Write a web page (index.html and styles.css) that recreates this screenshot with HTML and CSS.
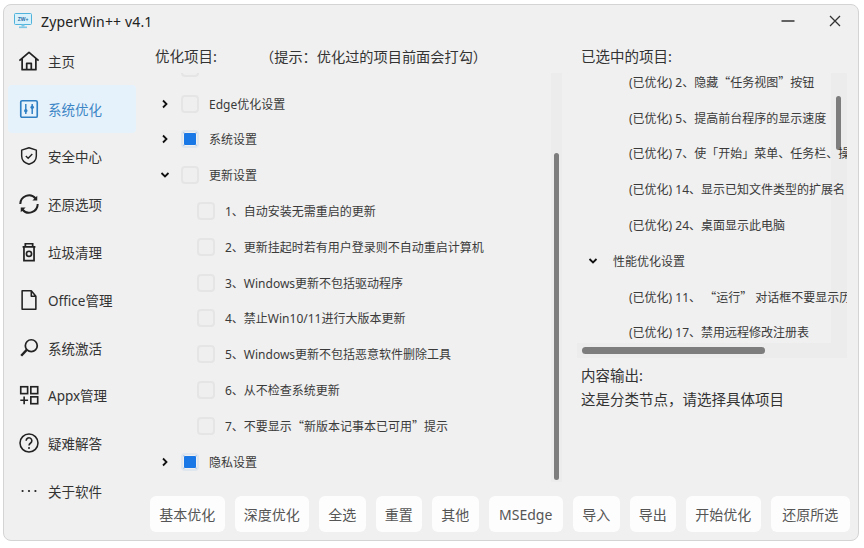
FILE: index.html
```html
<!DOCTYPE html>
<html lang="zh-CN">
<head>
<meta charset="utf-8">
<title>ZyperWin++ v4.1</title>
<link rel="stylesheet" href="styles.css">
</head>
<body>
<div class="window">
  <header class="titlebar">
    <svg class="logo" viewBox="0 0 18 16"><rect x="0.5" y="0.5" width="17" height="11" rx="1" fill="#d9f1fa" stroke="#4fb3dc"/><rect x="5" y="13.5" width="8" height="1.6" fill="#7cc7e6"/><rect x="7.5" y="11.5" width="3" height="2" fill="#7cc7e6"/><text x="9" y="8" class="logo-text" text-anchor="middle">ZW+</text></svg>
    <span class="title">ZyperWin++ v4.1</span>
    <div class="win-buttons">
      <svg class="win-btn" viewBox="0 0 14 14"><path d="M0.500 7h13" stroke="#333" stroke-width="1.600"/></svg>
      <svg class="win-btn" viewBox="0 0 14 14"><path d="M2 2l10 10M12 2L2 12" stroke="#333" stroke-width="1.300" fill="none"/></svg>
    </div>
  </header>
  <div class="body">
    <nav class="sidebar">
      <a class="nav-item"><svg class="nav-icon" viewBox="0 0 24 24"><path d="M1.500 11.500L12 2.500l10.500 9M4.500 9.500V21.500h15V9.500M9.500 21.500v-7h5v7" fill="none" stroke="#222" stroke-width="1.900" stroke-linejoin="round"/></svg><span>主页</span></a>
      <a class="nav-item active"><svg class="nav-icon" viewBox="0 0 24 24"><rect x="3" y="3" width="18" height="18" rx="1.500" fill="none" stroke="#2f7fc4" stroke-width="1.800"/><path d="M8.500 6.500v11M15.500 6.500v11" stroke="#2f7fc4" stroke-width="1.600"/><circle cx="8.500" cy="14" r="1.900" fill="#2f7fc4"/><circle cx="15.500" cy="10" r="1.900" fill="#2f7fc4"/></svg><span>系统优化</span></a>
      <a class="nav-item"><svg class="nav-icon" viewBox="0 0 24 24"><path d="M12 3l8 2.600v6.400c0 4.600-3.400 7.600-8 9-4.600-1.400-8-4.400-8-9V5.600z" fill="none" stroke="#222" stroke-width="1.600" stroke-linejoin="round"/><path d="M8.500 12l2.600 2.500 4.500-4.600" fill="none" stroke="#222" stroke-width="1.500"/></svg><span>安全中心</span></a>
      <a class="nav-item"><svg class="nav-icon" viewBox="0 0 24 24"><path d="M2.500 12a9.500 9.500 0 0 1 16.800-6M21.500 12a9.500 9.500 0 0 1-16.800 6" fill="none" stroke="#222" stroke-width="2.200"/><path d="M21 3v5.300h-5.300z" fill="#222"/><path d="M3 21v-5.300h5.300z" fill="#222"/></svg><span>还原选项</span></a>
      <a class="nav-item"><svg class="nav-icon" viewBox="0 0 24 24"><path d="M5 6.500h14M8 6.500V3h8v3.500M6.500 6.500v15h11v-15" fill="none" stroke="#222" stroke-width="1.900"/><circle cx="12" cy="14" r="2.800" fill="none" stroke="#222" stroke-width="1.800"/></svg><span>垃圾清理</span></a>
      <a class="nav-item"><svg class="nav-icon" viewBox="0 0 24 24"><path d="M4.500 2h10l5 6v14h-15zM14.500 2v6h5" fill="none" stroke="#222" stroke-width="1.700" stroke-linejoin="round"/></svg><span>Office管理</span></a>
      <a class="nav-item"><svg class="nav-icon" viewBox="0 0 24 24"><circle cx="14.500" cy="9.500" r="6.500" fill="none" stroke="#222" stroke-width="1.900"/><path d="M9.500 14l-6 6.500" stroke="#222" stroke-width="2.600"/></svg><span>系统激活</span></a>
      <a class="nav-item"><svg class="nav-icon" viewBox="0 0 24 24"><rect x="3" y="3" width="7.500" height="7.500" fill="none" stroke="#222" stroke-width="1.800"/><rect x="14" y="3" width="7.500" height="7.500" fill="none" stroke="#222" stroke-width="1.800"/><rect x="14" y="14" width="7.500" height="7.500" fill="none" stroke="#222" stroke-width="1.800"/><path d="M6.700 13.500v8.500M2.500 17.700h8.500" stroke="#222" stroke-width="1.800"/></svg><span>Appx管理</span></a>
      <a class="nav-item"><svg class="nav-icon" viewBox="0 0 24 24"><circle cx="12" cy="12" r="9.800" fill="none" stroke="#222" stroke-width="1.700"/><path d="M8.900 9.500a3.100 3.100 0 1 1 4.900 2.500c-1.100.8-1.800 1.400-1.800 2.800" fill="none" stroke="#222" stroke-width="1.700"/><circle cx="12" cy="17.500" r="1.100" fill="#222"/></svg><span>疑难解答</span></a>
      <a class="nav-item"><svg class="nav-icon" viewBox="0 0 24 24"><circle cx="5" cy="12" r="1.200" fill="#222"/><circle cx="12" cy="12" r="1.200" fill="#222"/><circle cx="19" cy="12" r="1.200" fill="#222"/></svg><span>关于软件</span></a>
    </nav>
    <main class="content">
      <div class="columns">
        <section class="left-col">
          <div class="heading"><span class="heading-main">优化项目:</span><span class="heading-hint">（提示：优化过的项目前面会打勾）</span></div>
          <div class="tree-frame">
            <div class="vbar vbar-left"><div class="vthumb vthumb-left"></div></div>
            <ul class="tree tree-left">
              <li class="row"><span class="chev"></span><span class="check"></span></li>
              <li class="row"><svg class="chev" viewBox="0 0 10 10"><path d="M3 1.500L6.500 5 3 8.500" fill="none" stroke="#111" stroke-width="1.800"/></svg><span class="check"></span><span class="label">Edge优化设置</span></li>
              <li class="row"><svg class="chev" viewBox="0 0 10 10"><path d="M3 1.500L6.500 5 3 8.500" fill="none" stroke="#111" stroke-width="1.800"/></svg><span class="check partial"></span><span class="label">系统设置</span></li>
              <li class="row"><svg class="chev" viewBox="0 0 10 10"><path d="M1.500 3L5 6.500 8.500 3" fill="none" stroke="#111" stroke-width="1.800"/></svg><span class="check"></span><span class="label">更新设置</span></li>
              <li class="row child"><span class="check"></span><span class="label">1、自动安装无需重启的更新</span></li>
              <li class="row child"><span class="check"></span><span class="label">2、更新挂起时若有用户登录则不自动重启计算机</span></li>
              <li class="row child"><span class="check"></span><span class="label">3、Windows更新不包括驱动程序</span></li>
              <li class="row child"><span class="check"></span><span class="label">4、禁止Win10/11进行大版本更新</span></li>
              <li class="row child"><span class="check"></span><span class="label">5、Windows更新不包括恶意软件删除工具</span></li>
              <li class="row child"><span class="check"></span><span class="label">6、从不检查系统更新</span></li>
              <li class="row child"><span class="check"></span><span class="label">7、不要显示<span class="cjk">“</span>新版本记事本已可用<span class="cjk">”</span>提示</span></li>
              <li class="row"><svg class="chev" viewBox="0 0 10 10"><path d="M3 1.500L6.500 5 3 8.500" fill="none" stroke="#111" stroke-width="1.800"/></svg><span class="check partial"></span><span class="label">隐私设置</span></li>
            </ul>
          </div>
        </section>
        <section class="right-col">
          <div class="heading heading-right">已选中的项目:</div>
          <div class="tree-frame right-frame">
            <div class="vbar vbar-right"><div class="vthumb vthumb-right"></div></div>
            <ul class="tree tree-right">
              <li class="row sel"><span>(已优化) 2、隐藏<span class="cjk">“</span>任务视图<span class="cjk">”</span>按钮</span></li>
              <li class="row sel">(已优化) 5、提高前台程序的显示速度</li>
              <li class="row sel">(已优化) 7、使「开始」菜单、任务栏、操作中心和标题栏透明</li>
              <li class="row sel">(已优化) 14、显示已知文件类型的扩展名</li>
              <li class="row sel">(已优化) 24、桌面显示此电脑</li>
              <li class="row sel-parent"><svg class="chev" viewBox="0 0 10 10"><path d="M1.500 3L5 6.500 8.500 3" fill="none" stroke="#111" stroke-width="1.800"/></svg><span class="label">性能优化设置</span></li>
              <li class="row sel"><span>(已优化) 11、 <span class="cjk">“</span>运行<span class="cjk">”</span> 对话框不要显示历史记录</span></li>
              <li class="row sel">(已优化) 17、禁用远程修改注册表</li>
            </ul>
            <div class="hbar"><div class="hthumb"></div></div>
          </div>
          <div class="output">
            <div>内容输出:</div>
            <div>这是分类节点，请选择具体项目</div>
          </div>
        </section>
      </div>
      <div class="actions">
        <button class="btn w4">基本优化</button>
        <button class="btn w4">深度优化</button>
        <button class="btn w2">全选</button>
        <button class="btn w2">重置</button>
        <button class="btn w2">其他</button>
        <button class="btn w4">MSEdge</button>
        <button class="btn w2">导入</button>
        <button class="btn w2">导出</button>
        <button class="btn w4">开始优化</button>
        <button class="btn w5">还原所选</button>
      </div>
    </main>
  </div>
</div>
</body>
</html>
```
FILE: styles.css
```css
* { box-sizing: border-box; }
html, body { margin: 0; height: 100%; background: #fff; overflow: hidden; }
body { padding: 4px 5px 7px 3px; font-family: "Noto Sans", "Noto Sans CJK SC", sans-serif; color: #333; }
ul { list-style: none; margin: 0; padding: 0; }

.window { height: 100%; background: #f0f0f0; border: 1px solid #d4d4d4; border-radius: 8px; display: flex; flex-direction: column; overflow: hidden; }

.titlebar { height: 32px; flex: none; display: flex; align-items: center; padding: 0 16px 0 10px; }
.logo { width: 18px; height: 16px; margin-right: 9px; }
.logo-text { font: 700 5px "Liberation Sans", sans-serif; fill: #1d6fa8; }
.title { font-size: 14px; letter-spacing: 0.15px; color: #222; }
.win-buttons { margin-left: auto; display: flex; gap: 33px; align-items: center; }
.win-btn { width: 14px; height: 14px; }

.body { flex: 1; display: flex; min-height: 0; }

.sidebar { width: 133px; flex: none; padding: 0 0 0 4px; display: flex; flex-direction: column; }
.nav-item { height: 47.8px; flex: none; display: flex; align-items: center; padding-left: 10px; gap: 8px; font-size: 13.5px; color: #333; border-radius: 4px; width: 128px; }
.nav-icon { width: 22px; height: 22px; flex: none; }
.active { background: #e6f2fb; color: #3d86c6; }

.content { flex: 1; min-width: 0; display: flex; flex-direction: column; padding: 0 8px 8px 13px; }
.columns { flex: 1; min-height: 0; display: flex; }

.left-col { width: 412px; flex: none; display: flex; flex-direction: column; }
.heading { height: 36px; flex: none; font-size: 14.5px; line-height: 39px; padding-left: 5px; white-space: nowrap; color: #333; }
.heading-main { display: inline-block; width: 105px; }
.heading-hint { font-size: 14.2px; }

.tree-frame { position: relative; height: 409px; overflow: hidden; }
.tree { position: relative; margin-top: -23px; }
.row { height: 35.8px; display: flex; align-items: center; font-size: 12px; color: #3a3a3a; white-space: nowrap; }
.cjk { font-family: "Noto Sans CJK SC", sans-serif; }
.chev { width: 10px; height: 10px; flex: none; margin: 0 11px 0 10px; }
.check { width: 18px; height: 18px; flex: none; background: #efefef; border: 2px solid #e5e5e5; border-radius: 4px; margin-right: 10px; }
.partial { background: #1a78e6; border-color: #dfe6ee; box-shadow: inset 0 0 0 1px #f0f0f0; }
.child { padding-left: 47px; }

.vbar { position: absolute; background: #ececec; }
.vbar-left { right: 0; top: 0; width: 11px; height: 409px; }
.vthumb { position: absolute; background: #7d7d7d; border-radius: 3px; width: 5px; }
.vthumb-left { left: 3px; top: 80px; height: 327px; }

.right-col { flex: 1; min-width: 0; display: flex; flex-direction: column; margin-left: 15px; }
.heading-right { padding-left: 4px; }
.right-frame { height: 285px; flex: none; width: 270px; }
.tree-right { margin-top: -9px; }
.sel { padding-left: 52px; }
.sel-parent { padding-left: 6px; }
.sel-parent .chev { margin: 0 15px 0 5px; }
.vbar-right { right: 0; top: 0; width: 16px; height: 285px; }
.vthumb-right { left: 5px; top: 23px; height: 54px; }
.hbar { position: absolute; left: 0; bottom: 0; width: 270px; height: 15px; background: #ececec; }
.hthumb { position: absolute; left: 5px; top: 4px; width: 183px; height: 7px; background: #7d7d7d; border-radius: 4px; }

.output { padding: 5px 0 0 4px; font-size: 14.5px; line-height: 24px; color: #333; }

.actions { flex: none; height: 36px; display: flex; gap: 10px; }
.btn { border: 0; background: #fdfdfd; border-radius: 6px; height: 36px; padding: 0; font: 14px "Noto Sans", "Noto Sans CJK SC", sans-serif; color: #555; flex: none; }
.w4 { width: 74.5px; }
.w2 { width: 46.5px; }
.w5 { width: 79.5px; }
```
